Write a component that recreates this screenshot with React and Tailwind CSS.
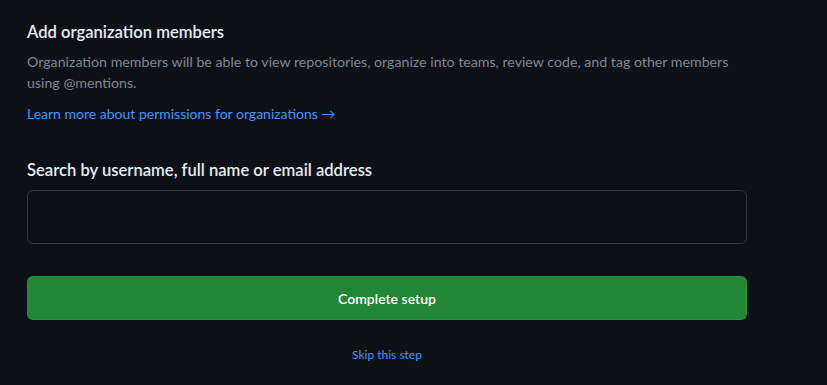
export default function App() {
  return (
    <div className="min-h-[385px] w-full bg-[#0d1117] font-['Lato',sans-serif]">
      <div className="w-[720px] ml-[27px] pt-[20px]">
        <h2 className="text-[16.6px] leading-[24px] font-semibold text-[#e6edf3]">Add organization members</h2>
        <p className="mt-[7px] text-[14.2px] leading-[21px] text-[#7d8590]">
          Organization members will be able to view repositories, organize into teams, review code, and tag other members using @mentions.
        </p>
        <a href="#" className="block mt-[10px] text-[14px] leading-[21px] text-[#4493f8]">Learn more about permissions for organizations →</a>
        <label className="block mt-[34px] text-[16.6px] leading-[24px] font-semibold text-[#e6edf3]">Search by username, full name or email address</label>
        <input className="mt-[8px] block w-full h-[54px] rounded-[6px] border border-[#30363d] bg-[#0d1117] px-3 text-[#e6edf3] outline-none" />
        <button className="mt-[32px] block w-full h-[44px] rounded-[6px] bg-[#238636] border border-[#2ea043]/40 text-[14px] font-semibold text-white">Complete setup</button>
        <div className="mt-[21px] text-center">
          <a href="#" className="text-[12px] text-[#4493f8]">Skip this step</a>
        </div>
      </div>
    </div>
  );
}
